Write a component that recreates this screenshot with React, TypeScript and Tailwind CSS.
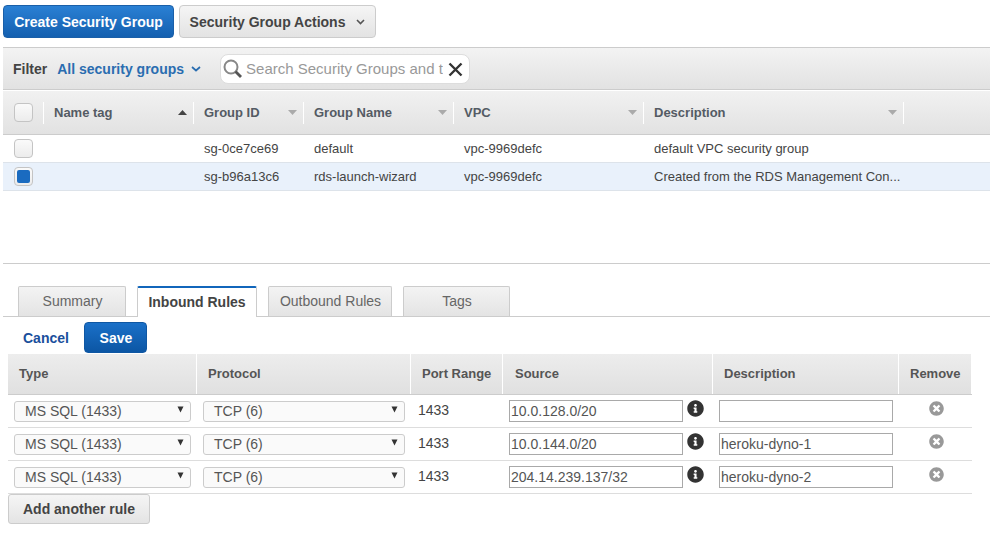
import React from "react";
import { FaInfoCircle, FaTimesCircle } from "react-icons/fa";

const Caret = ({ up = false, dark = false }: { up?: boolean; dark?: boolean }) => (
  <svg width="9" height="5" viewBox="0 0 9 5" className="shrink-0">
    <path d={up ? "M0 5L4.5 0L9 5Z" : "M0 0H9L4.5 5Z"} fill={dark ? "#444" : "#aaa"} />
  </svg>
);

const Sep = () => <div className="w-px h-[22px] bg-[#d0d0d0] border-r border-white shrink-0" />;

const Box = ({ checked = false }: { checked?: boolean }) => (
  <div className="w-[19px] h-[19px] rounded-[4px] border border-[#c4c4c4] bg-gradient-to-b from-[#fafafa] to-[#ececec] flex items-center justify-center">
    {checked && <div className="w-[13px] h-[13px] rounded-[2px] bg-[#1a6bc0]" />}
  </div>
);

const HeadCell = ({ label, w, caret, up }: { label: string; w: string; caret?: boolean; up?: boolean }) => (
  <div className={`${w} pl-[10px] flex items-center justify-between shrink-0`}>
    <span className="font-bold text-[#545b64] text-[13px]">{label}</span>
    <div className="flex items-center gap-[6px]">
      {caret && <Caret up={up} dark={up} />}
      <Sep />
    </div>
  </div>
);

const Tab = ({ label, w, active = false }: { label: string; w: string; active?: boolean }) =>
  active ? (
    <div className={`${w} h-[31px] -mb-px z-10 bg-white border-x border-[#ccc] border-t-2 border-t-[#1166bb] rounded-t-[2px] flex items-center justify-center font-bold text-[#444] pb-[1px]`}>
      {label}
    </div>
  ) : (
    <div className={`${w} h-[30px] border border-b-0 border-[#ccc] rounded-t-[2px] bg-gradient-to-b from-[#f3f3f3] to-[#e4e4e4] flex items-center justify-center text-[#666] pb-[1px] pl-[1px]`}>
      {label}
    </div>
  );

const Select = ({ label, w }: { label: string; w: string }) => (
  <div className={`${w} h-[21px] relative rounded-[3px] border border-[#ccc] bg-[#fafafa] flex items-center pl-[10px] text-[#555]`}>
    {label}
    <svg width="7" height="7" viewBox="0 0 7 7" className="absolute right-[6px] top-[4px]">
      <path d="M0.5 0.5H6.5L3.5 6.5Z" fill="#333" />
    </svg>
  </div>
);

const Input = ({ value, w }: { value: string; w: string }) => (
  <input
    readOnly
    value={value}
    className={`${w} h-[22px] border border-[#a9a9a9] bg-white px-px text-[14px] text-[#555] outline-none font-['Liberation_Sans',sans-serif]`}
  />
);

const rules = [
  { src: "10.0.128.0/20", desc: "" },
  { src: "10.0.144.0/20", desc: "heroku-dyno-1" },
  { src: "204.14.239.137/32", desc: "heroku-dyno-2" },
];

const grid = "grid grid-cols-[189px_214px_92px_210px_186px_73px]";

export default function App() {
  return (
    <div className="w-[997px] h-[533px] overflow-hidden bg-white font-['Liberation_Sans',sans-serif] text-[14px] leading-[16px] text-[#444] pl-[3px] pr-[7px] pt-[5px]">
      <div className="flex gap-[5px] h-[33px]">
        <div className="w-[171px] rounded-[4px] border border-[#1a5fa8] bg-gradient-to-b from-[#2a80d4] to-[#1460b0] flex items-center justify-center font-bold text-white">
          Create Security Group
        </div>
        <div className="w-[197px] rounded-[4px] border border-[#ccc] bg-gradient-to-b from-[#f5f5f5] to-[#e3e3e3] flex items-center justify-center gap-[11px] font-bold text-[#444]">
          Security Group Actions
          <svg width="9" height="6" viewBox="0 0 9 6"><path d="M1 1L4.5 4.5L8 1" fill="none" stroke="#555" strokeWidth="1.6" /></svg>
        </div>
      </div>

      <div className="mt-[9px] h-[43px] border-y border-[#ccc] bg-gradient-to-b from-[#f3f3f3] to-[#e2e2e2] flex items-center pl-[10px]">
        <span className="font-bold text-[#444]">Filter</span>
        <span className="ml-[10px] font-bold text-[#2a6db0]">All security groups</span>
        <svg className="ml-[7px]" width="10" height="6" viewBox="0 0 10 6"><path d="M1 1L5 4.5L9 1" fill="none" stroke="#2a6db0" strokeWidth="1.7" /></svg>
        <div className="ml-[19px] w-[250px] h-[30px] rounded-[8px] border border-[#ddd] bg-white flex items-center pl-[1px] relative">
          <svg width="21" height="21" viewBox="0 0 21 21" className="shrink-0">
            <circle cx="9" cy="9" r="6.5" fill="none" stroke="#888" strokeWidth="2" />
            <path d="M13.5 13.5L19 19" stroke="#555" strokeWidth="2.8" />
          </svg>
          <span className="ml-[3px] w-[197px] overflow-hidden whitespace-nowrap text-[#999] text-[15px]">Search Security Groups and t</span>
          <svg width="15" height="15" viewBox="0 0 15 15" className="absolute right-[6px] top-[7px]">
            <path d="M1.5 1.5L13.5 13.5M13.5 1.5L1.5 13.5" stroke="#333" strokeWidth="2.4" />
          </svg>
        </div>
      </div>

      <div className="mt-px h-[44px] border-b border-[#ccc] bg-gradient-to-b from-[#f1f1f1] to-[#e2e2e2] flex items-center">
        <div className="w-[41px] pl-[11px] flex items-center justify-between shrink-0">
          <Box />
          <Sep />
        </div>
        <HeadCell label="Name tag" w="w-[150px]" caret up />
        <HeadCell label="Group ID" w="w-[110px]" caret />
        <HeadCell label="Group Name" w="w-[150px]" caret />
        <HeadCell label="VPC" w="w-[190px]" caret />
        <HeadCell label="Description" w="w-[260px]" caret />
      </div>

      {[
        { id: "sg-0ce7ce69", name: "default", d: "default VPC security group", sel: false },
        { id: "sg-b96a13c6", name: "rds-launch-wizard", d: "Created from the RDS Management Con...", sel: true },
      ].map((r) => (
        <div key={r.id} className={`h-[28px] border-b border-[#dde3ea] flex items-center text-[13px] ${r.sel ? "bg-[#e9f1fb]" : "bg-white"}`}>
          <div className="w-[191px] pl-[11px] shrink-0"><Box checked={r.sel} /></div>
          <div className="w-[110px] pl-[10px] shrink-0">{r.id}</div>
          <div className="w-[150px] pl-[10px] shrink-0">{r.name}</div>
          <div className="w-[190px] pl-[10px] shrink-0">vpc-9969defc</div>
          <div className="pl-[10px]">{r.d}</div>
        </div>
      ))}

      <div className="mt-[72px] border-t border-[#ccc] pt-[22px]">
        <div className="border-b border-[#ccc] h-[31px] flex items-end pl-[15px] gap-[11px]">
          <Tab label="Summary" w="w-[108px]" />
          <Tab label="Inbound Rules" w="w-[120px]" active />
          <Tab label="Outbound Rules" w="w-[124px]" />
          <Tab label="Tags" w="w-[107px]" />
        </div>

        <div className="pl-[20px] pt-[5px] h-[37px] flex items-start">
          <span className="font-bold text-[#1a4f9c] mt-[8px]">Cancel</span>
          <div className="ml-[15px] w-[63px] h-[31px] rounded-[4px] border border-[#0f57a3] bg-gradient-to-b from-[#1a70c8] to-[#0c56a4] flex items-center justify-center font-bold text-white pl-[1px]">
            Save
          </div>
        </div>

        <div className="ml-[5px] w-[964px]">
          <div className={`${grid} h-[41px] border-b border-[#ccc] bg-gradient-to-b from-[#ededed] to-[#e0e0e0] font-bold text-[#555] text-[13px]`}>
            {["Type", "Protocol", "Port Range", "Source", "Description", "Remove"].map((h, i) => (
              <div key={h} className={`flex items-center border-r border-white ${i === 3 ? "pl-[12px]" : "pl-[11px]"}`}>{h}</div>
            ))}
          </div>
          {rules.map((r) => (
            <div key={r.src} className={`${grid} h-[33px] border-b border-[#ddd] items-center`}>
              <div className="pl-[6px]"><Select label="MS SQL (1433)" w="w-[177px]" /></div>
              <div className="pl-[6px]"><Select label="TCP (6)" w="w-[202px]" /></div>
              <div className="pl-[7px] -mt-[2px]">1433</div>
              <div className="pl-[6px] flex items-start gap-[4px]">
                <Input value={r.src} w="w-[174px]" />
                <FaInfoCircle className="w-[17px] h-[17px] text-[#333]" />
              </div>
              <div className="pl-[6px]"><Input value={r.desc} w="w-[174px]" /></div>
              <div className="pl-[30px] -mt-[5px]"><FaTimesCircle className="w-[15px] h-[15px] text-[#999]" /></div>
            </div>
          ))}
          <div className="w-[142px] h-[30px] rounded-[3px] border border-[#ccc] bg-gradient-to-b from-[#f5f5f5] to-[#e4e4e4] flex items-center justify-center font-bold text-[#444]">
            Add another rule
          </div>
        </div>
      </div>
    </div>
  );
}
